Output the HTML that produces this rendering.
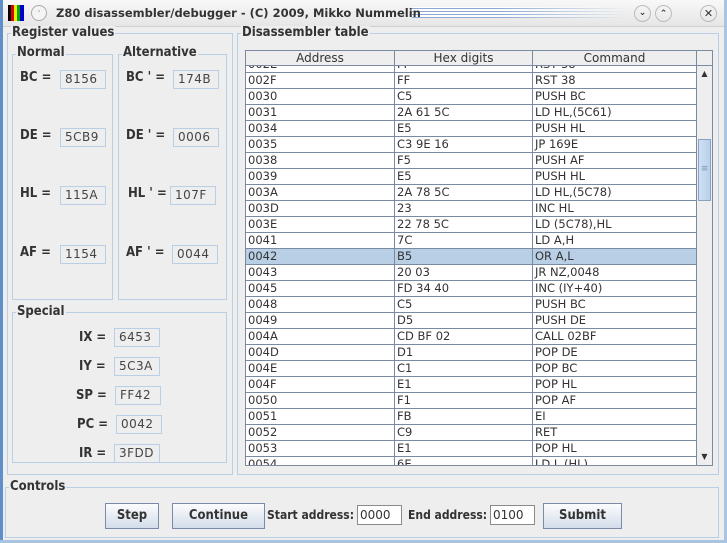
<!DOCTYPE html><html><head><style>
*{margin:0;padding:0;box-sizing:border-box}
body{width:727px;height:543px;background:#eeeeee;position:relative;overflow:hidden;font-family:"DejaVu Sans","Liberation Sans",sans-serif;font-size:11px;color:#333}
.a{position:absolute}
.c{font-family:"DejaVu Sans Condensed","Liberation Sans Narrow","DejaVu Sans",sans-serif;font-weight:bold}
.tb{position:absolute;border:1px solid #b8cfe5}
.tt{position:absolute;background:#eeeeee;font-family:"DejaVu Sans Condensed","Liberation Sans Narrow",sans-serif;font-weight:bold;font-size:13px;color:#333;padding:0 1px;line-height:14px}
.lbl{position:absolute;font-family:"DejaVu Sans Condensed","Liberation Sans Narrow",sans-serif;font-weight:bold;font-size:13px;color:#333;white-space:nowrap}
.fld{position:absolute;border:1px solid #b8cfe5;height:19px;width:46px;font-size:12px;line-height:17px;padding-left:4px;color:#444;letter-spacing:.5px}
.btn{position:absolute;height:26px;border:1px solid #7a8aa8;background:linear-gradient(#fbfcfd,#d3ddea);font-family:"DejaVu Sans Condensed","Liberation Sans Narrow",sans-serif;font-weight:bold;font-size:13px;text-align:center;line-height:24px;color:#333}
.row{position:absolute;left:0;width:450px;height:16px;border-bottom:1px solid #7a8aa0;background:#fff;font-size:11.5px;line-height:15px}
.row span{position:absolute;top:0;height:16px;padding-left:2px;border-right:1px solid #7a8aa0}
.sel{background:#b8cfe5}
</style></head><body>
<div class="a" style="left:0;top:0;width:727px;height:27px;background:linear-gradient(#f8f8f8,#e6e6e6);border-bottom:1px solid #d0d0d0"></div>
<div class="a" style="left:0;top:0;width:3px;height:543px;background:#5f8fc8"></div>
<div class="a" style="left:724px;top:0;width:3px;height:543px;background:#a9c3e3"></div>
<div class="a" style="left:0;top:540px;width:727px;height:3px;background:#a9c3e3"></div>
<div class="a" style="left:8px;top:5px;width:16px;height:16px;background:linear-gradient(90deg,#000 0 3px,#d00 3px 6px,#ee0 6px 9px,#0a0 9px 12px,#00c 12px 16px)"></div>
<div class="a" style="left:31px;top:5px;width:16px;height:16px;border:1px solid #aaa;border-radius:50%;background:#f4f4f4;text-align:center;line-height:12px;font-size:8px">·</div>
<div class="a" style="left:412px;top:7px;width:215px;height:11px;background:repeating-linear-gradient(#fff 0 1px,#8aaad4 1px 2px,#fff 2px 3px);-webkit-mask-image:linear-gradient(90deg,#000 40%,transparent);mask-image:linear-gradient(90deg,#000 40%,transparent)"></div>
<div class="a" style="left:56px;top:6px;font-size:11.5px;font-weight:bold;color:#333;white-space:nowrap">Z80 disassembler/debugger - (C) 2009, Mikko Nummelin</div>
<div class="a" style="left:634px;top:5px;width:17px;height:17px;border:1px solid #bbb;border-radius:50%;text-align:center;font-size:9px;line-height:15px;font-weight:bold">⌄</div>
<div class="a" style="left:655px;top:5px;width:17px;height:17px;border:1px solid #bbb;border-radius:50%;text-align:center;font-size:9px;line-height:17px;font-weight:bold">⌃</div>
<div class="a" style="left:700px;top:5px;width:17px;height:17px;border:1px solid #bbb;border-radius:50%;text-align:center;font-size:11px;line-height:15px;font-weight:bold">✕</div>

<div class="tb" style="left:7px;top:33px;width:226px;height:442px"></div>
<div class="tt" style="left:11px;top:26px">Register values</div>
<div class="tb" style="left:12px;top:54px;width:101px;height:246px"></div>
<div class="tt" style="left:16px;top:46px">Normal</div>
<div class="tb" style="left:118px;top:54px;width:109px;height:246px"></div>
<div class="tt" style="left:122px;top:46px">Alternative</div>
<div class="lbl" style="left:20px;top:70px">BC =</div><div class="fld" style="left:60px;top:70px">8156</div>
<div class="lbl" style="left:20px;top:128px">DE =</div><div class="fld" style="left:60px;top:128px">5CB9</div>
<div class="lbl" style="left:20px;top:186px">HL =</div><div class="fld" style="left:60px;top:186px">115A</div>
<div class="lbl" style="left:20px;top:245px">AF =</div><div class="fld" style="left:60px;top:245px">1154</div>
<div class="lbl" style="left:126px;top:70px">BC ' =</div><div class="fld" style="left:173px;top:70px">174B</div>
<div class="lbl" style="left:126px;top:128px">DE ' =</div><div class="fld" style="left:173px;top:128px">0006</div>
<div class="lbl" style="left:128px;top:186px">HL ' =</div><div class="fld" style="left:170px;top:186px">107F</div>
<div class="lbl" style="left:126px;top:245px">AF ' =</div><div class="fld" style="left:172px;top:245px">0044</div>
<div class="tb" style="left:12px;top:312px;width:215px;height:151px"></div>
<div class="tt" style="left:16px;top:305px">Special</div>
<div class="lbl" style="left:79px;top:330px">IX =</div><div class="fld" style="left:114px;top:328px">6453</div>
<div class="lbl" style="left:79px;top:359px">IY =</div><div class="fld" style="left:114px;top:357px">5C3A</div>
<div class="lbl" style="left:76px;top:388px">SP =</div><div class="fld" style="left:115px;top:386px">FF42</div>
<div class="lbl" style="left:77px;top:417px">PC =</div><div class="fld" style="left:116px;top:415px">0042</div>
<div class="lbl" style="left:79px;top:446px">IR =</div><div class="fld" style="left:114px;top:444px">3FDD</div>

<div class="tb" style="left:237px;top:33px;width:482px;height:442px"></div>
<div class="tt" style="left:241px;top:26px">Disassembler table</div>
<div class="a" style="left:245px;top:50px;width:468px;height:416px;border:1px solid #7a8aa0;background:#fff"></div>
<div class="a" style="left:246px;top:51px;width:450px;height:15px;background:#eee;border-bottom:1px solid #7a8aa0;font-size:12px;line-height:15px;color:#333">
<span class="a" style="left:0;width:149px;text-align:center;border-right:1px solid #7a8aa0;height:15px">Address</span>
<span class="a" style="left:149px;width:138px;text-align:center;border-right:1px solid #7a8aa0;height:15px">Hex digits</span>
<span class="a" style="left:287px;width:163px;text-align:center;height:15px">Command</span></div>
<div class="a" style="left:696px;top:51px;width:16px;height:15px;background:#eee;border-left:1px solid #7a8aa0;border-bottom:1px solid #7a8aa0"></div>
<div class="a" style="left:246px;top:66px;width:450px;height:399px;overflow:hidden" id="tb"></div>
<div class="a" style="left:696px;top:66px;width:16px;height:399px;background:#eee;border-left:1px solid #7a8aa0"></div>
<div class="a" style="left:698px;top:67px;width:13px;height:14px;font-size:8px;text-align:center;line-height:14px">▲</div>
<div class="a" style="left:698px;top:450px;width:13px;height:14px;font-size:8px;text-align:center;line-height:14px">▼</div>
<div class="a" style="left:698px;top:139px;width:13px;height:62px;border:1px solid #8aa3c4;background:linear-gradient(90deg,#cfe0f2,#b9d0ea);font-size:9px;text-align:center;line-height:58px;color:#7a95b8">≡</div>

<div class="tb" style="left:5px;top:487px;width:714px;height:51px"></div>
<div class="tt" style="left:9px;top:480px">Controls</div>
<div class="btn" style="left:105px;top:503px;width:54px">Step</div>
<div class="btn" style="left:172px;top:503px;width:93px">Continue</div>
<div class="lbl" style="left:267px;top:508px;font-size:12px">Start address:</div>
<div class="a" style="left:357px;top:505px;width:45px;height:20px;border:1px solid #8a8a8a;background:#fff;font-size:12px;line-height:18px;padding-left:2px">0000</div>
<div class="lbl" style="left:408px;top:508px;font-size:12px">End address:</div>
<div class="a" style="left:490px;top:505px;width:45px;height:20px;border:1px solid #8a8a8a;background:#fff;font-size:12px;line-height:18px;padding-left:2px">0100</div>
<div class="btn" style="left:543px;top:503px;width:79px">Submit</div>
<script>
var d=[["002E","FF","RST 38"],["002F","FF","RST 38"],["0030","C5","PUSH BC"],["0031","2A 61 5C","LD HL,(5C61)"],["0034","E5","PUSH HL"],["0035","C3 9E 16","JP 169E"],["0038","F5","PUSH AF"],["0039","E5","PUSH HL"],["003A","2A 78 5C","LD HL,(5C78)"],["003D","23","INC HL"],["003E","22 78 5C","LD (5C78),HL"],["0041","7C","LD A,H"],["0042","B5","OR A,L"],["0043","20 03","JR NZ,0048"],["0045","FD 34 40","INC (IY+40)"],["0048","C5","PUSH BC"],["0049","D5","PUSH DE"],["004A","CD BF 02","CALL 02BF"],["004D","D1","POP DE"],["004E","C1","POP BC"],["004F","E1","POP HL"],["0050","F1","POP AF"],["0051","FB","EI"],["0052","C9","RET"],["0053","E1","POP HL"],["0054","6E","LD L,(HL)"]];
var h="";d.forEach(function(r,i){h+='<div class="row'+(r[0]=="0042"?' sel':'')+'" style="top:'+(-9+16*i)+'px"><span style="left:0;width:149px">'+r[0]+'</span><span style="left:149px;width:138px">'+r[1]+'</span><span style="left:287px;width:163px;border-right:none">'+r[2]+'</span></div>';});
document.getElementById("tb").innerHTML=h;
</script>
</body></html>
